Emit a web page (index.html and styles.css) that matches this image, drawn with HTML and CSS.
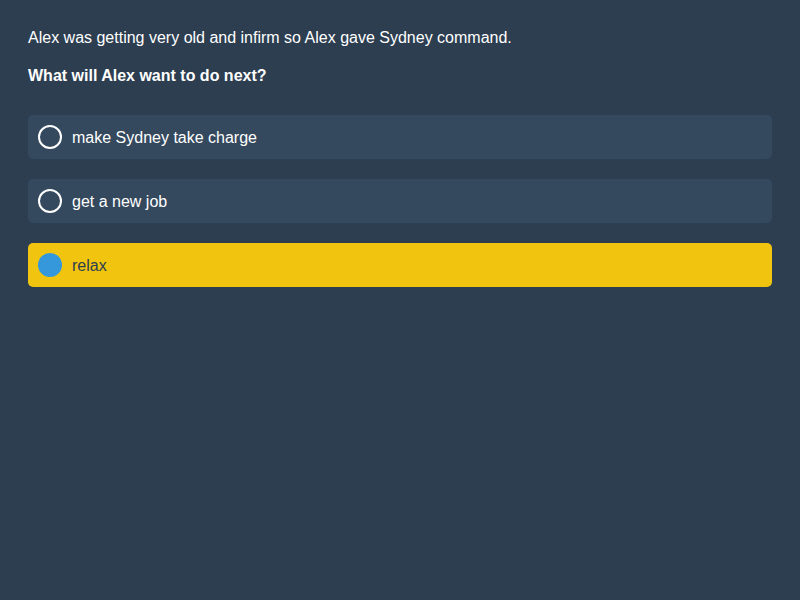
FILE: index.html
```html
<!DOCTYPE html>
<html>
<head>
<meta charset="utf-8">
<link rel="stylesheet" href="styles.css">
</head>
<body>
<div class="quiz">
  <p class="context">Alex was getting very old and infirm so Alex gave Sydney command.</p>
  <p class="question">What will Alex want to do next?</p>
  <div class="options">
    <div class="option"><span class="radio"></span><span class="label">make Sydney take charge</span></div>
    <div class="option"><span class="radio"></span><span class="label">get a new job</span></div>
    <div class="option selected"><span class="radio"></span><span class="label">relax</span></div>
  </div>
</div>
</body>
</html>
```
FILE: styles.css
```css
html, body {
  margin: 0;
  padding: 0;
  background: #2c3e50;
  height: 100%;
}
body {
  font-family: "Liberation Sans", Arial, sans-serif;
  font-size: 16px;
  color: #ffffff;
}
.quiz {
  padding: 28px;
}
.context {
  margin: 0;
  line-height: 20px;
}
.question {
  margin: 18px 0 0 0;
  font-weight: bold;
  line-height: 20px;
}
.options {
  margin-top: 29px;
  display: flex;
  flex-direction: column;
  gap: 20px;
}
.option {
  display: flex;
  align-items: center;
  gap: 10px;
  height: 44px;
  box-sizing: border-box;
  padding: 0 10px;
  background: #34495e;
  border-radius: 5px;
}
.label {
  padding-top: 2px;
}
.radio {
  width: 24px;
  height: 24px;
  box-sizing: border-box;
  border: 2px solid #ffffff;
  border-radius: 50%;
  flex: none;
}
.option.selected {
  background: #f1c40f;
  color: #2c3e50;
}
.option.selected .radio {
  background: #3498db;
  border-color: #3498db;
}
```
